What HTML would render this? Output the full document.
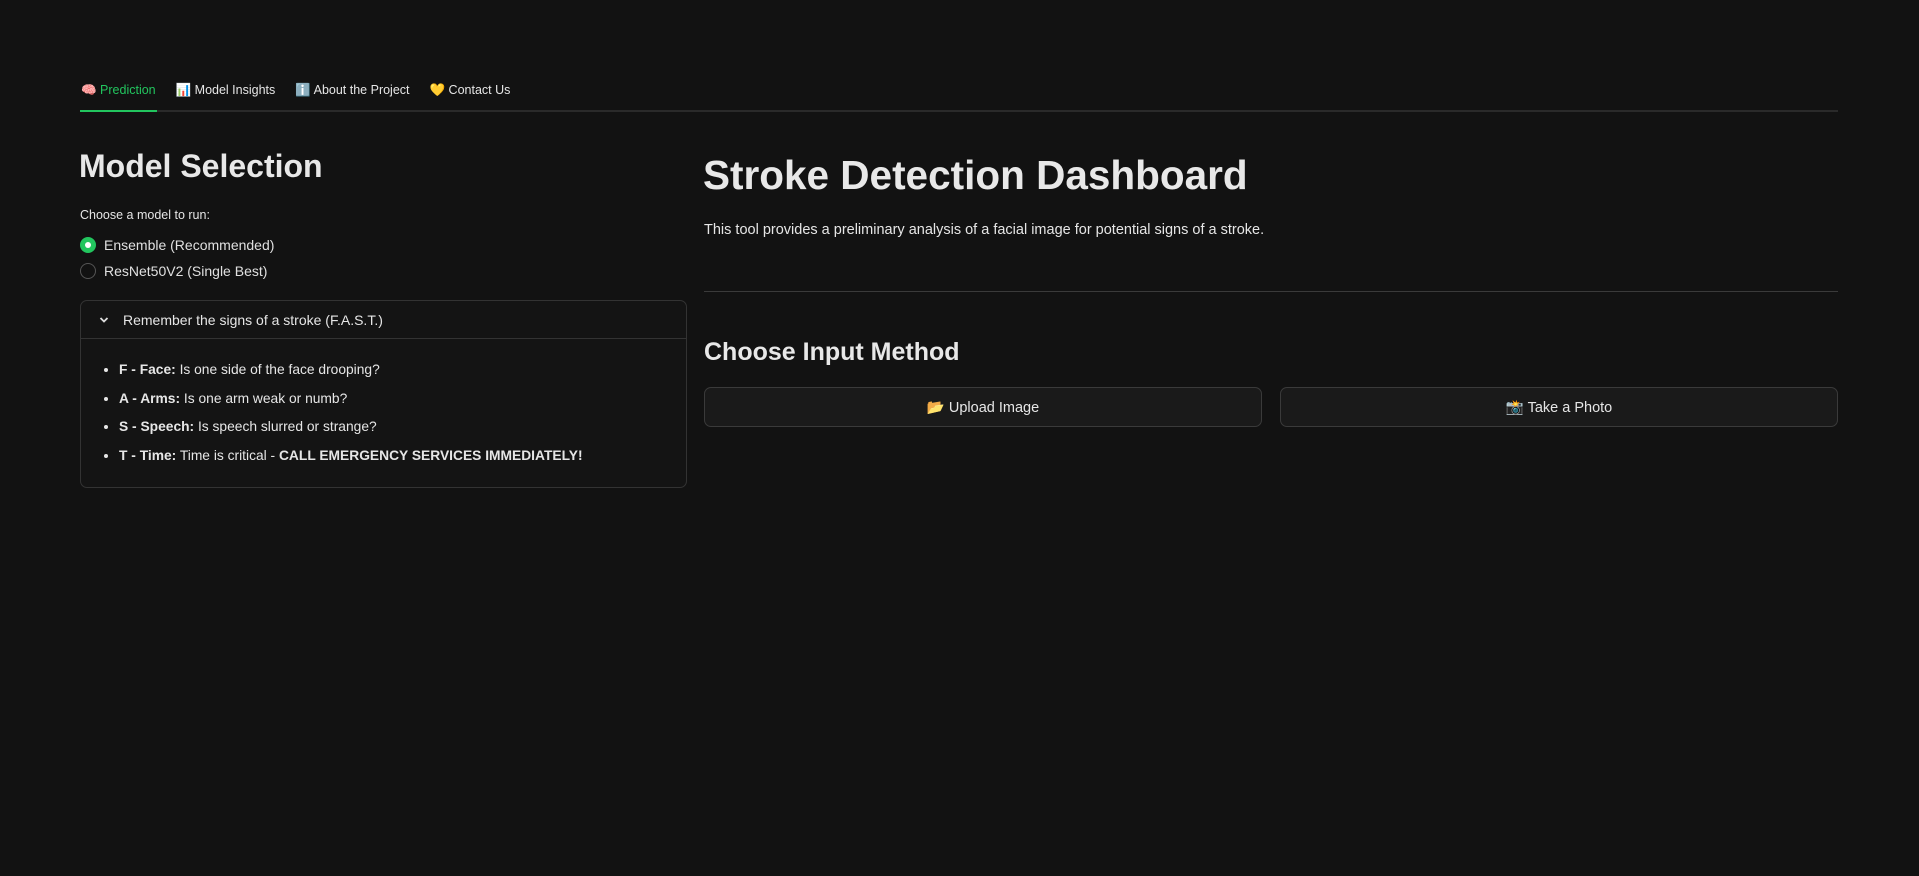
<!DOCTYPE html>
<html><head><meta charset="utf-8"><style>
*{box-sizing:border-box;margin:0;padding:0}
body{width:1919px;height:876px;background:#121212;color:#e6e6e6;font-family:"Liberation Sans",sans-serif;position:relative;overflow:hidden}
.abs{position:absolute}
.tabs{left:80px;top:78px;right:81px;height:34px;border-bottom:2px solid #2a2a2a;display:flex;gap:18px;font-size:12.5px}
.tab{height:34px;line-height:24px;white-space:nowrap;padding:0 1px}
.tab.act{color:#22c55e;border-bottom:2px solid #22c55e}
h1{font-size:32px;font-weight:bold;color:#e8e8e8}
.radio{display:flex;align-items:center;font-size:14px;gap:8px;color:#e0e0e0}
.rd{width:16px;height:16px;border-radius:50%;border:1px solid #555;display:inline-block}
.rd.on{background:#22c55e;border:none;position:relative}
.rd.on:after{content:"";position:absolute;left:5px;top:5px;width:6px;height:6px;border-radius:50%;background:#fff}
.exp{left:80px;top:300px;width:607px;height:188px;border:1px solid #333;border-radius:7px;background:#141414}
.exphead{height:38px;border-bottom:1px solid #333;display:flex;align-items:center;padding-left:18px;font-size:14px;gap:14px}
ul{list-style:disc;padding-left:38px;padding-top:19px;font-size:13.8px}
li{height:28.6px;line-height:24px}
.btn{top:387px;height:40px;border:1px solid #3a3a3a;border-radius:7px;background:#1a1a1a;display:flex;align-items:center;justify-content:center;font-size:14.5px;color:#e6e6e6}
</style></head><body>
<div class="abs tabs">
<div class="tab act">🧠 Prediction</div>
<div class="tab">📊 Model Insights</div>
<div class="tab">ℹ️ About the Project</div>
<div class="tab">💛 Contact Us</div>
</div>
<h1 class="abs" style="left:79px;top:148px">Model Selection</h1>
<div class="abs" style="left:80px;top:208px;font-size:12.5px">Choose a model to run:</div>
<div class="abs radio" style="left:80px;top:237px"><span class="rd on"></span>Ensemble (Recommended)</div>
<div class="abs radio" style="left:80px;top:263px"><span class="rd"></span>ResNet50V2 (Single Best)</div>
<div class="abs exp">
<div class="exphead"><svg width="10" height="8" viewBox="0 0 10 8"><path d="M1.5 2l3.5 3.5L8.5 2" stroke="#ddd" stroke-width="1.8" fill="none"/></svg>Remember the signs of a stroke (F.A.S.T.)</div>
<ul>
<li><b>F - Face:</b> Is one side of the face drooping?</li>
<li><b>A - Arms:</b> Is one arm weak or numb?</li>
<li><b>S - Speech:</b> Is speech slurred or strange?</li>
<li><b>T - Time:</b> Time is critical - <b>CALL EMERGENCY SERVICES IMMEDIATELY!</b></li>
</ul>
</div>
<div class="abs" style="left:703px;top:152px;font-size:40.5px;font-weight:bold;color:#e8e8e8">Stroke Detection Dashboard</div>
<div class="abs" style="left:704px;top:222px;font-size:14.5px">This tool provides a preliminary analysis of a facial image for potential signs of a stroke.</div>
<div class="abs" style="left:704px;top:291px;width:1134px;height:1px;background:#3a3a3a"></div>
<div class="abs" style="left:704px;top:338px;font-size:25px;font-weight:bold;color:#e8e8e8">Choose Input Method</div>
<div class="abs btn" style="left:704px;width:558px">📂 Upload Image</div>
<div class="abs btn" style="left:1280px;width:558px">📸 Take a Photo</div>
</body></html>
